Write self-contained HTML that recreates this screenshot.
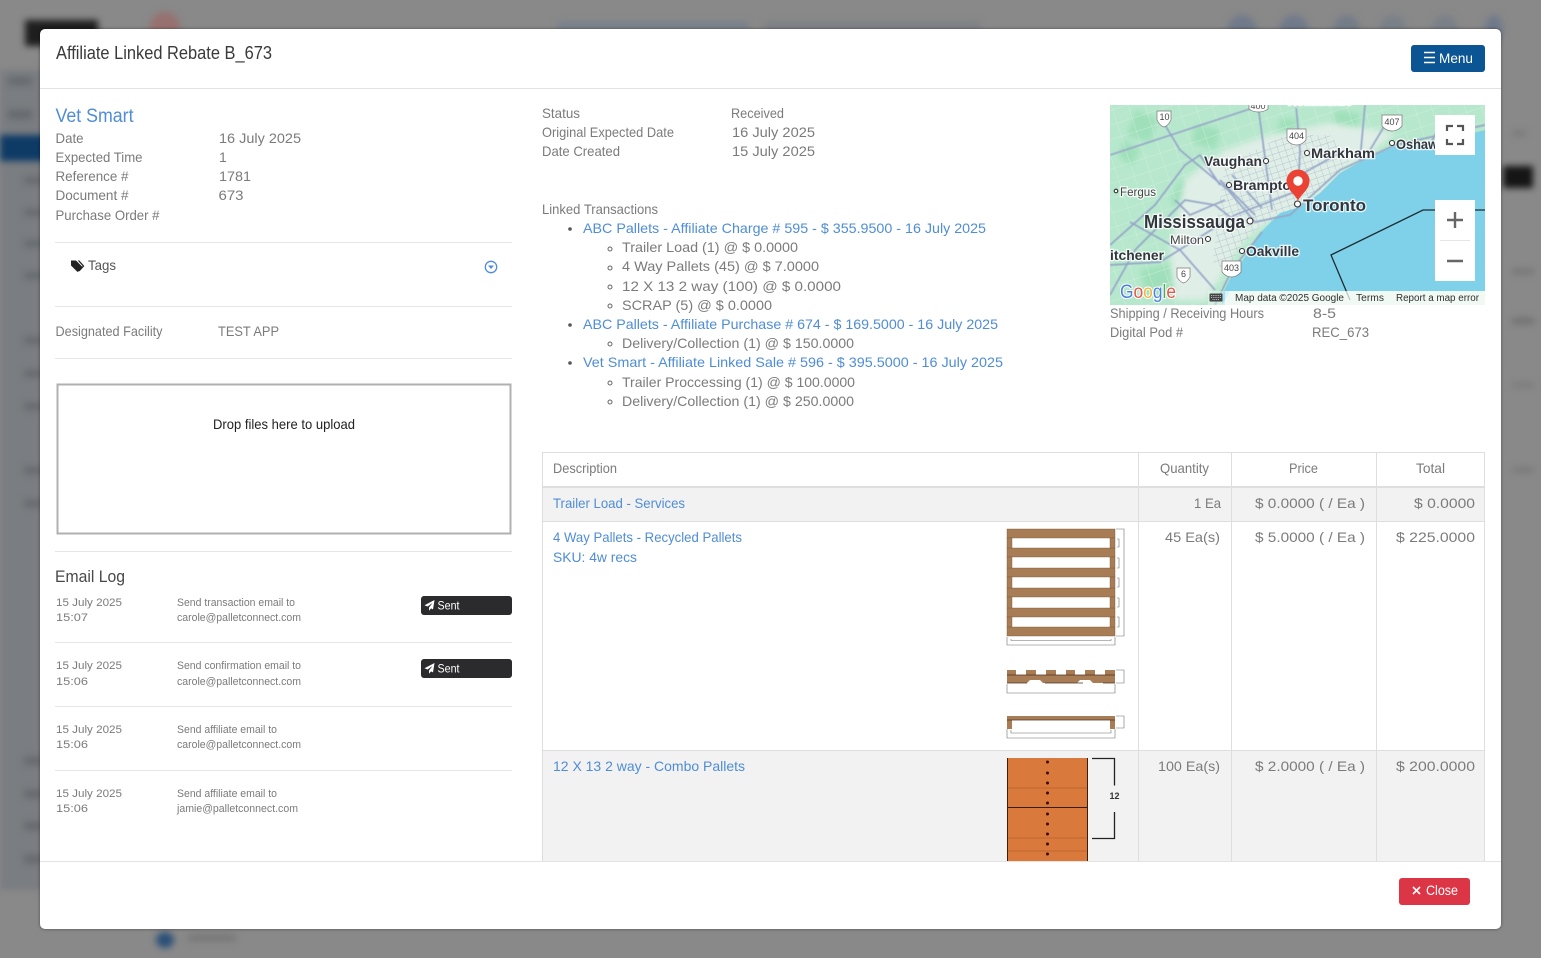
<!DOCTYPE html>
<html lang="en"><head><meta charset="utf-8"><title>Affiliate Linked Rebate B_673</title>
<style>
html,body{margin:0;padding:0;width:1541px;height:958px;overflow:hidden;background:#898989;font-family:"Liberation Sans",sans-serif}
.bg{position:absolute;left:0;top:0;width:1541px;height:958px;overflow:hidden}
.side{position:absolute;left:0;top:70px;width:60px;height:820px;background:#7a7d81;filter:blur(3px)}
.b{position:absolute;filter:blur(3.5px);background:#666a6e}
.modal{position:absolute;left:40px;top:29px;width:1461px;height:900px;background:#fff;border-radius:5px;box-shadow:0 0 3px rgba(0,0,0,.45)}
svg.main{position:absolute;left:0;top:0}
svg.main text{font-family:"Liberation Sans",sans-serif;font-size:14px;fill:#7b7b7b}
svg.main .l{fill:#4f8dd6}
svg.main .d{fill:#3a3a3a}
svg.main .s{font-size:11px}
svg.main .m{fill:#33373d;font-weight:700;paint-order:stroke;stroke:#fff;stroke-width:2.5px;stroke-opacity:.8}
svg.main .n{fill:#444;paint-order:stroke;stroke:#fff;stroke-width:2.5px;stroke-opacity:.8}
</style></head><body>
<div class="bg">
<div class="side"></div>
<div class="b" style="left:0;top:135px;width:60px;height:26px;background:#0e3a66"></div>
<div class="b" style="left:25px;top:20px;width:73px;height:26px;background:#1e1e1e"></div>
<div class="b" style="left:150px;top:12px;width:30px;height:30px;background:#97706f;border-radius:50%"></div>
<div class="b" style="left:8px;top:77px;width:24px;height:8px"></div>
<div class="b" style="left:8px;top:110px;width:24px;height:9px"></div>
<div class="b" style="left:24px;top:177px;width:20px;height:7px"></div>
<div class="b" style="left:24px;top:209px;width:20px;height:7px"></div>
<div class="b" style="left:24px;top:240px;width:20px;height:7px"></div>
<div class="b" style="left:24px;top:272px;width:20px;height:7px"></div>
<div class="b" style="left:24px;top:337px;width:20px;height:7px"></div>
<div class="b" style="left:24px;top:370px;width:20px;height:7px"></div>
<div class="b" style="left:24px;top:403px;width:20px;height:7px"></div>
<div class="b" style="left:24px;top:467px;width:20px;height:7px"></div>
<div class="b" style="left:24px;top:500px;width:20px;height:7px"></div>
<div class="b" style="left:24px;top:757px;width:20px;height:8px"></div>
<div class="b" style="left:24px;top:790px;width:20px;height:8px"></div>
<div class="b" style="left:24px;top:822px;width:20px;height:8px"></div>
<div class="b" style="left:24px;top:855px;width:20px;height:8px"></div>
<div class="b" style="left:558px;top:22px;width:190px;height:8px;background:#75808c"></div>
<div class="b" style="left:765px;top:22px;width:215px;height:8px;background:#7b7f85"></div>
<div class="b" style="left:1228px;top:15px;width:28px;height:28px;background:#70798a;border-radius:50%"></div>
<div class="b" style="left:1280px;top:15px;width:28px;height:28px;background:#70798a;border-radius:50%"></div>
<div class="b" style="left:1334px;top:15px;width:26px;height:28px;background:#747c88;border-radius:50%"></div>
<div class="b" style="left:1380px;top:15px;width:26px;height:28px;background:#7a8088;border-radius:50%"></div>
<div class="b" style="left:1432px;top:15px;width:26px;height:28px;background:#7a8088;border-radius:50%"></div>
<div class="b" style="left:1485px;top:15px;width:18px;height:28px;background:#70798a;border-radius:50%"></div>
<div class="b" style="left:1503px;top:166px;width:30px;height:22px;background:#151515"></div>
<div class="b" style="left:1512px;top:131px;width:14px;height:5px;background:#787878"></div>
<div class="b" style="left:1512px;top:269px;width:22px;height:5px;background:#747474"></div>
<div class="b" style="left:1512px;top:318px;width:22px;height:6px;background:#6f6f6f"></div>
<div class="b" style="left:1512px;top:383px;width:22px;height:4px;background:#787878"></div>
<div class="b" style="left:1512px;top:468px;width:22px;height:4px;background:#747474"></div>
<div class="b" style="left:156px;top:932px;width:18px;height:16px;background:#2b4f78;border-radius:50%"></div>
<div class="b" style="left:188px;top:935px;width:48px;height:6px;background:#757575"></div>
</div>
<div class="modal"></div>
<svg class="main" width="1541" height="958" viewBox="0 0 1541 958" xmlns="http://www.w3.org/2000/svg">
<defs>
<clipPath id="mapc"><rect x="1110" y="105" width="375" height="200"/></clipPath>
<clipPath id="tbl"><rect x="540" y="440" width="950" height="421"/></clipPath>
<filter id="soft"><feGaussianBlur stdDeviation="3"/></filter>
<filter id="soft1"><feGaussianBlur stdDeviation=".45"/></filter>
<pattern id="grid" width="7" height="6" patternUnits="userSpaceOnUse" patternTransform="rotate(-18)"><path d="M0 0H7M0 0V6" stroke="#9aa6bd" stroke-width=".7" fill="none"/></pattern>
<pattern id="grid2" width="16" height="14" patternUnits="userSpaceOnUse" patternTransform="rotate(-18)"><path d="M0 0H16M0 0V14" stroke="#d6efe0" stroke-width=".7" fill="none"/></pattern>
</defs>

<!-- header -->
<rect x="40" y="88" width="1461" height="1" fill="#e3e3e3"/>
<text class="d" x="56" y="59" textLength="216" lengthAdjust="spacingAndGlyphs" style="font-size:18px">Affiliate Linked Rebate B_673</text>
<rect x="1411" y="45" width="74" height="27" rx="3" fill="#0c5594"/>
<path d="M1424 52.500h11M1424 57.500h11M1424 62.500h11" stroke="#fff" stroke-width="1.400"/>
<text x="1439" y="63" textLength="34" lengthAdjust="spacingAndGlyphs" style="fill:#fff">Menu</text>

<!-- left column -->
<text class="l" x="55.500" y="122" textLength="78" lengthAdjust="spacingAndGlyphs" style="font-size:19px">Vet Smart</text>
<text x="55.500" y="143" textLength="28" lengthAdjust="spacingAndGlyphs">Date</text>
<text x="219" y="143" textLength="82" lengthAdjust="spacingAndGlyphs">16 July 2025</text>
<text x="55.500" y="162" textLength="87" lengthAdjust="spacingAndGlyphs">Expected Time</text>
<text x="219" y="162">1</text>
<text x="55.500" y="181" textLength="73" lengthAdjust="spacingAndGlyphs">Reference #</text>
<text x="219" y="181" textLength="32" lengthAdjust="spacingAndGlyphs">1781</text>
<text x="55.500" y="200" textLength="73" lengthAdjust="spacingAndGlyphs">Document #</text>
<text x="218.500" y="200" textLength="25" lengthAdjust="spacingAndGlyphs">673</text>
<text x="55.500" y="220" textLength="104" lengthAdjust="spacingAndGlyphs">Purchase Order #</text>
<rect x="55" y="242" width="457" height="1" fill="#e6e6e6"/>
<path d="M71 260.500h5l6 6a1 1 0 0 1 0 1.400l-3.600 3.600a1 1 0 0 1-1.400 0l-6-6z" fill="#222"/><path d="M78.500 260.500l5 5.500-4.500 5" fill="none" stroke="#222" stroke-width="1.300"/>
<text x="88" y="270" textLength="28" lengthAdjust="spacingAndGlyphs" style="fill:#555">Tags</text>
<circle cx="491" cy="267" r="5.700" fill="none" stroke="#4f8dd6" stroke-width="1.300"/><path d="M488 265.500h6l-3 3.500z" fill="#4f8dd6"/>
<rect x="55" y="306" width="457" height="1" fill="#e6e6e6"/>
<text x="55.500" y="336" textLength="107" lengthAdjust="spacingAndGlyphs">Designated Facility</text>
<text x="218" y="336" textLength="61" lengthAdjust="spacingAndGlyphs">TEST APP</text>
<rect x="55" y="358" width="457" height="1" fill="#e6e6e6"/>
<rect x="57.500" y="384.500" width="453" height="149" fill="#fff" stroke="#b0b0b0" stroke-width="2"/>
<text x="213" y="429" textLength="142" lengthAdjust="spacingAndGlyphs" style="fill:#222">Drop files here to upload</text>
<rect x="55" y="551" width="457" height="1" fill="#e6e6e6"/>
<text x="55" y="582" textLength="70" lengthAdjust="spacingAndGlyphs" style="font-size:17px;fill:#484848">Email Log</text>

<text class="s" x="56" y="606" textLength="66" lengthAdjust="spacingAndGlyphs">15 July 2025</text>
<text class="s" x="56" y="621" textLength="32" lengthAdjust="spacingAndGlyphs">15:07</text>
<text class="s" x="177" y="606" textLength="118" lengthAdjust="spacingAndGlyphs">Send transaction email to</text>
<text class="s" x="177" y="621" textLength="124" lengthAdjust="spacingAndGlyphs">carole@palletconnect.com</text>
<rect x="421" y="596" width="91" height="19" rx="3" fill="#2b2b2d"/>
<path d="M434.500 600l-10 5.200 3 1.300 5-3.500-3.500 4.500v3.200l2-2.300 2 1z" fill="#fff"/>
<text x="437.500" y="609.500" textLength="22" lengthAdjust="spacingAndGlyphs" style="font-size:11.500px;fill:#fff">Sent</text>
<rect x="55" y="642" width="457" height="1" fill="#e6e6e6"/>

<text class="s" x="56" y="669" textLength="66" lengthAdjust="spacingAndGlyphs">15 July 2025</text>
<text class="s" x="56" y="685" textLength="32" lengthAdjust="spacingAndGlyphs">15:06</text>
<text class="s" x="177" y="669" textLength="124" lengthAdjust="spacingAndGlyphs">Send confirmation email to</text>
<text class="s" x="177" y="685" textLength="124" lengthAdjust="spacingAndGlyphs">carole@palletconnect.com</text>
<rect x="421" y="659" width="91" height="19" rx="3" fill="#2b2b2d"/>
<path d="M434.500 663l-10 5.200 3 1.300 5-3.500-3.500 4.500v3.200l2-2.300 2 1z" fill="#fff"/>
<text x="437.500" y="672.500" textLength="22" lengthAdjust="spacingAndGlyphs" style="font-size:11.500px;fill:#fff">Sent</text>
<rect x="55" y="706" width="457" height="1" fill="#e6e6e6"/>

<text class="s" x="56" y="733" textLength="66" lengthAdjust="spacingAndGlyphs">15 July 2025</text>
<text class="s" x="56" y="748" textLength="32" lengthAdjust="spacingAndGlyphs">15:06</text>
<text class="s" x="177" y="733" textLength="100" lengthAdjust="spacingAndGlyphs">Send affiliate email to</text>
<text class="s" x="177" y="748" textLength="124" lengthAdjust="spacingAndGlyphs">carole@palletconnect.com</text>
<rect x="55" y="770" width="457" height="1" fill="#e6e6e6"/>

<text class="s" x="56" y="797" textLength="66" lengthAdjust="spacingAndGlyphs">15 July 2025</text>
<text class="s" x="56" y="812" textLength="32" lengthAdjust="spacingAndGlyphs">15:06</text>
<text class="s" x="177" y="797" textLength="100" lengthAdjust="spacingAndGlyphs">Send affiliate email to</text>
<text class="s" x="177" y="812" textLength="121" lengthAdjust="spacingAndGlyphs">jamie@palletconnect.com</text>

<!-- middle column -->
<text x="542" y="118" textLength="38" lengthAdjust="spacingAndGlyphs">Status</text>
<text x="731" y="118" textLength="53" lengthAdjust="spacingAndGlyphs">Received</text>
<text x="542" y="137" textLength="132" lengthAdjust="spacingAndGlyphs">Original Expected Date</text>
<text x="732" y="137" textLength="83" lengthAdjust="spacingAndGlyphs">16 July 2025</text>
<text x="542" y="156" textLength="78" lengthAdjust="spacingAndGlyphs">Date Created</text>
<text x="732" y="156" textLength="83" lengthAdjust="spacingAndGlyphs">15 July 2025</text>
<text x="542" y="214" textLength="116" lengthAdjust="spacingAndGlyphs">Linked Transactions</text>
<g fill="#555"><circle cx="570" cy="229" r="1.800"/><circle cx="570" cy="325" r="1.800"/><circle cx="570" cy="363" r="1.800"/></g>
<g fill="none" stroke="#666" stroke-width="1"><circle cx="610" cy="249" r="2"/><circle cx="610" cy="268" r="2"/><circle cx="610" cy="287" r="2"/><circle cx="610" cy="306" r="2"/><circle cx="610" cy="344" r="2"/><circle cx="610" cy="383" r="2"/><circle cx="610" cy="402" r="2"/></g>
<text class="l" x="583" y="233" textLength="403" lengthAdjust="spacingAndGlyphs">ABC Pallets - Affiliate Charge # 595 - $ 355.9500 - 16 July 2025</text>
<text x="622" y="252" textLength="176" lengthAdjust="spacingAndGlyphs">Trailer Load (1) @ $ 0.0000</text>
<text x="622" y="271" textLength="197" lengthAdjust="spacingAndGlyphs">4 Way Pallets (45) @ $ 7.0000</text>
<text x="622" y="291" textLength="219" lengthAdjust="spacingAndGlyphs">12 X 13 2 way (100) @ $ 0.0000</text>
<text x="622" y="310" textLength="150" lengthAdjust="spacingAndGlyphs">SCRAP (5) @ $ 0.0000</text>
<text class="l" x="583" y="329" textLength="415" lengthAdjust="spacingAndGlyphs">ABC Pallets - Affiliate Purchase # 674 - $ 169.5000 - 16 July 2025</text>
<text x="622" y="348" textLength="232" lengthAdjust="spacingAndGlyphs">Delivery/Collection (1) @ $ 150.0000</text>
<text class="l" x="583" y="367" textLength="420" lengthAdjust="spacingAndGlyphs">Vet Smart - Affiliate Linked Sale # 596 - $ 395.5000 - 16 July 2025</text>
<text x="622" y="387" textLength="233" lengthAdjust="spacingAndGlyphs">Trailer Proccessing (1) @ $ 100.0000</text>
<text x="622" y="406" textLength="232" lengthAdjust="spacingAndGlyphs">Delivery/Collection (1) @ $ 250.0000</text>

<!-- map -->
<g clip-path="url(#mapc)">
<rect x="1110" y="105" width="375" height="200" fill="#b7e8cd"/>
<g fill="#9fe0ba" filter="url(#soft)"><path d="M1135 110l22 8-6 24-24-6zM1180 180l28 6 8 26-30 8-16-20zM1335 110l26 4-6 22-22-4zM1280 118l18 2-2 20-18-4zM1125 140l15 10-8 16-14-10zM1140 270l30-6 10 26-34 6zM1195 125l25 4-4 20-24-6z"/></g>
<rect x="1110" y="105" width="375" height="200" fill="url(#grid2)"/>
<path d="M1225 150l45-15 60-12 65 10-25 20-30 20-20 22-20 15-30 10-25 20-20 30-20 30-30 0-5-50 15-70z" fill="#dfeee6" filter="url(#soft)"/>
<path d="M1225 165l60-30 45 0 20 25-20 20-20 20-20 15-28 10-22 22-12 25-15-10 5-50z" fill="url(#grid)" opacity=".75"/>
<path d="M1222 295L1232 275 1243 260 1260 233 1280 213 1300 207 1320 193 1340 173 1367 158 1393 147 1433 143 1485 130V305H1222z" fill="#7fd0e9"/>
<path d="M1222 305l8-14H1485v14z" fill="#c8e8d6"/>
<g fill="none" stroke="#95a5c8" stroke-width="1.700" filter="url(#soft1)">
<path d="M1110 155L1180 132 1262 105"/>
<path d="M1165 125L1180 150 1228 190 1255 222 1290 215 1340 170 1395 145 1485 125"/>
<path d="M1258 105L1264 150 1272 210"/>
<path d="M1296 105L1300 150 1298 195"/>
<path d="M1110 245L1155 205 1185 165 1200 155 1220 185"/>
<path d="M1110 295L1135 250 1185 200 1215 205 1240 225"/>
<path d="M1130 222L1180 250 1215 290"/>
<path d="M1175 200L1190 215 1225 200"/>
<path d="M1110 265L1160 262 1235 215 1300 190"/>
<path d="M1385 125L1370 150M1440 125L1430 145M1365 105L1360 160"/>
<path d="M1215 305L1232 270 1262 232"/>
<path d="M1220 180L1255 215M1232 175L1262 208M1300 175L1345 150"/>
</g>
<path d="M1485 210H1423L1331 255 1350 300" fill="none" stroke="#1d2c33" stroke-width="1.300"/>
<path d="M1157 111h14v9q-3 6-7 7-4-1-7-7z" fill="#fff" stroke="#777" stroke-width=".7"/>
<path d="M1249 103h19v6q-4 3-9.500 3-5.500 0-9.500-3z" fill="#fff" stroke="#777" stroke-width=".7"/>
<path d="M1287 129h19v11q-4 5-9.500 5-5.500 0-9.500-5z" fill="#fff" stroke="#777" stroke-width=".7"/>
<path d="M1382 115h20v11q-4 5-10 5-6 0-10-5z" fill="#fff" stroke="#777" stroke-width=".7"/>
<path d="M1177 268h13v9q-3 5-6.500 6-3.500-1-6.500-6z" fill="#fff" stroke="#777" stroke-width=".7"/>
<path d="M1222 261h19v11q-4 5-9.500 5-5.500 0-9.500-5z" fill="#fff" stroke="#777" stroke-width=".7"/>
<text x="1159.500" y="120" style="font-size:9px;fill:#444">10</text>
<text x="1250.500" y="109" style="font-size:9px;fill:#444">400</text>
<text x="1289" y="139" style="font-size:9px;fill:#444">404</text>
<text x="1384.500" y="125" style="font-size:9px;fill:#444">407</text>
<text x="1181" y="277" style="font-size:9px;fill:#444">6</text>
<text x="1224" y="271" style="font-size:9px;fill:#444">403</text>
<text class="n" x="1288" y="105" textLength="62" lengthAdjust="spacingAndGlyphs" style="font-size:11px">Newmarket</text>
<text class="m" x="1204" y="166" textLength="58" lengthAdjust="spacingAndGlyphs">Vaughan</text>
<text class="m" x="1311" y="158" textLength="64" lengthAdjust="spacingAndGlyphs">Markham</text>
<text class="m" x="1396" y="149" textLength="42" lengthAdjust="spacingAndGlyphs">Oshaw</text>
<text class="m" x="1233" y="190" textLength="58" lengthAdjust="spacingAndGlyphs">Brampto</text>
<text class="n" x="1120" y="196" textLength="36" lengthAdjust="spacingAndGlyphs" style="font-size:11.500px">Fergus</text>
<text class="m" x="1144" y="228" textLength="101" lengthAdjust="spacingAndGlyphs" style="font-size:18px">Mississauga</text>
<text class="n" x="1170" y="244" textLength="34" lengthAdjust="spacingAndGlyphs" style="font-size:12px">Milton</text>
<text class="m" x="1246" y="256" textLength="53" lengthAdjust="spacingAndGlyphs">Oakville</text>
<text class="m" x="1110" y="260" textLength="54" lengthAdjust="spacingAndGlyphs">itchener</text>
<text class="m" x="1303" y="211" textLength="63" lengthAdjust="spacingAndGlyphs" style="font-size:17px">Toronto</text>
<g fill="#fff" stroke="#333" stroke-width="1.100"><circle cx="1266" cy="161" r="2.500"/><circle cx="1307" cy="153" r="2.500"/><circle cx="1392" cy="143" r="2.500"/><circle cx="1229" cy="185" r="2.500"/><circle cx="1116" cy="191" r="1.800"/><circle cx="1250" cy="221" r="3"/><circle cx="1208" cy="239" r="2.500"/><circle cx="1242" cy="251" r="2.500"/><circle cx="1297.500" cy="204" r="3"/></g>
<path d="M1298 201c-2-6-11.500-11-11.500-20a11.500 11.500 0 0 1 23 0c0 9-9.500 14-11.500 20z" fill="#ea4335"/><circle cx="1298" cy="181" r="4.700" fill="#fff"/>
<rect x="1225" y="291" width="260" height="14" fill="#fff" opacity=".72"/>
<rect x="1208" y="291" width="17" height="14" fill="#fff" opacity=".35"/>
<rect x="1209.500" y="293.500" width="13" height="8" fill="#444" rx=".8"/><path d="M1211 295.500h10M1211 297.500h10M1212.500 299.500h7" stroke="#ddd" stroke-width=".8" stroke-dasharray="1 .8"/>
<text x="1235" y="301" textLength="109" lengthAdjust="spacingAndGlyphs" style="font-size:10px;fill:#2f2f2f">Map data ©2025 Google</text>
<text x="1356" y="301" textLength="28" lengthAdjust="spacingAndGlyphs" style="font-size:10px;fill:#2f2f2f">Terms</text>
<text x="1396" y="301" textLength="83" lengthAdjust="spacingAndGlyphs" style="font-size:10px;fill:#2f2f2f">Report a map error</text>
<text x="1120" y="298" textLength="56" lengthAdjust="spacingAndGlyphs" style="font-size:19px;paint-order:stroke;stroke:#fff;stroke-width:2px"><tspan style="fill:#4d80d8">G</tspan><tspan style="fill:#e2574a">o</tspan><tspan style="fill:#eeb63c">o</tspan><tspan style="fill:#4d80d8">g</tspan><tspan style="fill:#4faa5f">l</tspan><tspan style="fill:#e2574a">e</tspan></text>
<rect x="1435" y="115" width="40" height="40" fill="#fff"/>
<path d="M1447 131v-5h6M1457 126h6v5M1463 139v5h-6M1453 144h-6v-5" fill="none" stroke="#555" stroke-width="2.200"/>
<rect x="1435" y="200" width="40" height="81" fill="#fff"/>
<rect x="1440" y="240" width="30" height="1" fill="#e6e6e6"/>
<path d="M1447 220h16M1455 212v16M1447 261h16" stroke="#666" stroke-width="2.400"/>
</g>
<text x="1110" y="318" textLength="154" lengthAdjust="spacingAndGlyphs">Shipping / Receiving Hours</text>
<text x="1313" y="318" textLength="23" lengthAdjust="spacingAndGlyphs">8-5</text>
<text x="1110" y="337" textLength="73" lengthAdjust="spacingAndGlyphs">Digital Pod #</text>
<text x="1312" y="337" textLength="57" lengthAdjust="spacingAndGlyphs">REC_673</text>

<!-- table -->
<g clip-path="url(#tbl)">
<rect x="543" y="488" width="941" height="33" fill="#f2f2f2"/>
<rect x="543" y="751" width="941" height="115" fill="#f2f2f2"/>
<g fill="#dedede">
<rect x="542" y="452" width="943" height="1"/>
<rect x="542" y="486" width="943" height="2"/>
<rect x="542" y="521" width="943" height="1"/>
<rect x="542" y="750" width="943" height="1"/>
<rect x="542" y="452" width="1" height="420"/>
<rect x="1138" y="452" width="1" height="420"/>
<rect x="1231" y="452" width="1" height="420"/>
<rect x="1376" y="452" width="1" height="420"/>
<rect x="1484" y="452" width="1" height="420"/>
</g>
<!-- pallet top -->
<g fill="#a87c55" stroke="#7a5a3e" stroke-width=".4">
<rect x="1007" y="529" width="108" height="9"/><rect x="1007" y="548" width="108" height="9"/><rect x="1007" y="568" width="108" height="9"/><rect x="1007" y="588" width="108" height="9"/><rect x="1007" y="608" width="108" height="9"/><rect x="1007" y="627" width="108" height="9"/>
<rect x="1007" y="538" width="5" height="10"/><rect x="1110" y="538" width="5" height="10"/><rect x="1007" y="557" width="5" height="11"/><rect x="1110" y="557" width="5" height="11"/><rect x="1007" y="577" width="5" height="11"/><rect x="1110" y="577" width="5" height="11"/><rect x="1007" y="597" width="5" height="11"/><rect x="1110" y="597" width="5" height="11"/><rect x="1007" y="617" width="5" height="10"/><rect x="1110" y="617" width="5" height="10"/>
</g>
<g fill="none" stroke="#6f6f6f" stroke-width=".6">
<path d="M1116 529h8v107h-8M1117 539h2v8h-2M1117 558h2v10h-2M1117 578h2v9h-2M1117 598h2v9h-2M1117 617h2v10h-2"/>
<path d="M1007 637v8h108v-8M1011 639v1.500h100v-1.500"/>
<path d="M1116 670h8v13h-8M1007 684v9h108v-9"/>
<path d="M1116 716h8v12h-8M1007 729v9h108v-9M1011 730v3h100v-3"/>
</g>
<!-- pallet side -->
<g fill="#a87c55">
<rect x="1007" y="670" width="9" height="5"/><rect x="1026" y="670" width="10" height="5"/><rect x="1046" y="670" width="10" height="5"/><rect x="1066" y="670" width="9" height="5"/><rect x="1085" y="670" width="10" height="5"/><rect x="1105" y="670" width="10" height="5"/>
<path d="M1007 675h108v8h-22l-3-3h-10l-3 3h-34l-3-3h-10l-3 3h-20z"/>
<rect x="1007" y="716" width="108" height="4"/><rect x="1007" y="720" width="5" height="9"/><rect x="1110" y="720" width="5" height="9"/>
</g>
<path d="M1007 675h108M1007 683h20M1045 683h38M1103 683h12M1007 720h108" fill="none" stroke="#4b3420" stroke-width=".8"/>
<!-- orange -->
<rect x="1007" y="758" width="81" height="110" fill="#d9793c"/>
<path d="M1007 788h81M1007 838h81M1007 851h81" stroke="#b5622d" stroke-width=".8"/>
<path d="M1007 807.500h81M1007.500 758v110M1087.500 758v110" stroke="#3a1e0c" stroke-width="1"/>
<g fill="#3a0d08"><circle cx="1047.500" cy="762" r="1.500"/><circle cx="1047.500" cy="773" r="1.500"/><circle cx="1047.500" cy="783" r="1.500"/><circle cx="1047.500" cy="793" r="1.500"/><circle cx="1047.500" cy="803" r="1.500"/><circle cx="1047.500" cy="814" r="1.500"/><circle cx="1047.500" cy="824" r="1.500"/><circle cx="1047.500" cy="834" r="1.500"/><circle cx="1047.500" cy="844" r="1.500"/><circle cx="1047.500" cy="854" r="1.500"/></g>
<path d="M1092 758.500h22.500v27M1114.500 812v26.500H1092" fill="none" stroke="#222" stroke-width="1.300"/>
<text x="1109.500" y="799" textLength="10" lengthAdjust="spacingAndGlyphs" style="font-size:9.500px;font-weight:700;fill:#333">12</text>
</g>
<text x="553" y="473" textLength="64" lengthAdjust="spacingAndGlyphs">Description</text>
<text x="1160" y="473" textLength="49" lengthAdjust="spacingAndGlyphs">Quantity</text>
<text x="1289" y="473" textLength="29" lengthAdjust="spacingAndGlyphs">Price</text>
<text x="1416" y="473" textLength="29" lengthAdjust="spacingAndGlyphs">Total</text>
<text class="l" x="553" y="508" textLength="132" lengthAdjust="spacingAndGlyphs">Trailer Load - Services</text>
<text x="1194" y="508" textLength="27" lengthAdjust="spacingAndGlyphs">1 Ea</text>
<text x="1255" y="508" textLength="110" lengthAdjust="spacingAndGlyphs">$ 0.0000 ( / Ea )</text>
<text x="1414" y="508" textLength="61" lengthAdjust="spacingAndGlyphs">$ 0.0000</text>
<text class="l" x="553" y="542" textLength="189" lengthAdjust="spacingAndGlyphs">4 Way Pallets - Recycled Pallets</text>
<text class="l" x="553" y="562" textLength="84" lengthAdjust="spacingAndGlyphs">SKU: 4w recs</text>
<text x="1165" y="542" textLength="55" lengthAdjust="spacingAndGlyphs">45 Ea(s)</text>
<text x="1255" y="542" textLength="110" lengthAdjust="spacingAndGlyphs">$ 5.0000 ( / Ea )</text>
<text x="1396" y="542" textLength="79" lengthAdjust="spacingAndGlyphs">$ 225.0000</text>
<text class="l" x="553" y="771" textLength="192" lengthAdjust="spacingAndGlyphs">12 X 13 2 way - Combo Pallets</text>
<text x="1158" y="771" textLength="62" lengthAdjust="spacingAndGlyphs">100 Ea(s)</text>
<text x="1255" y="771" textLength="110" lengthAdjust="spacingAndGlyphs">$ 2.0000 ( / Ea )</text>
<text x="1396" y="771" textLength="79" lengthAdjust="spacingAndGlyphs">$ 200.0000</text>

<!-- footer -->
<rect x="40" y="861" width="1461" height="1" fill="#e3e3e3"/>
<rect x="1399" y="878" width="71" height="27" rx="3" fill="#dc3545"/>
<path d="M1413 887l7 7M1420 887l-7 7" stroke="#fff" stroke-width="1.600"/>
<text x="1426" y="895" textLength="32" lengthAdjust="spacingAndGlyphs" style="fill:#fff">Close</text>
</svg>
</body></html>
